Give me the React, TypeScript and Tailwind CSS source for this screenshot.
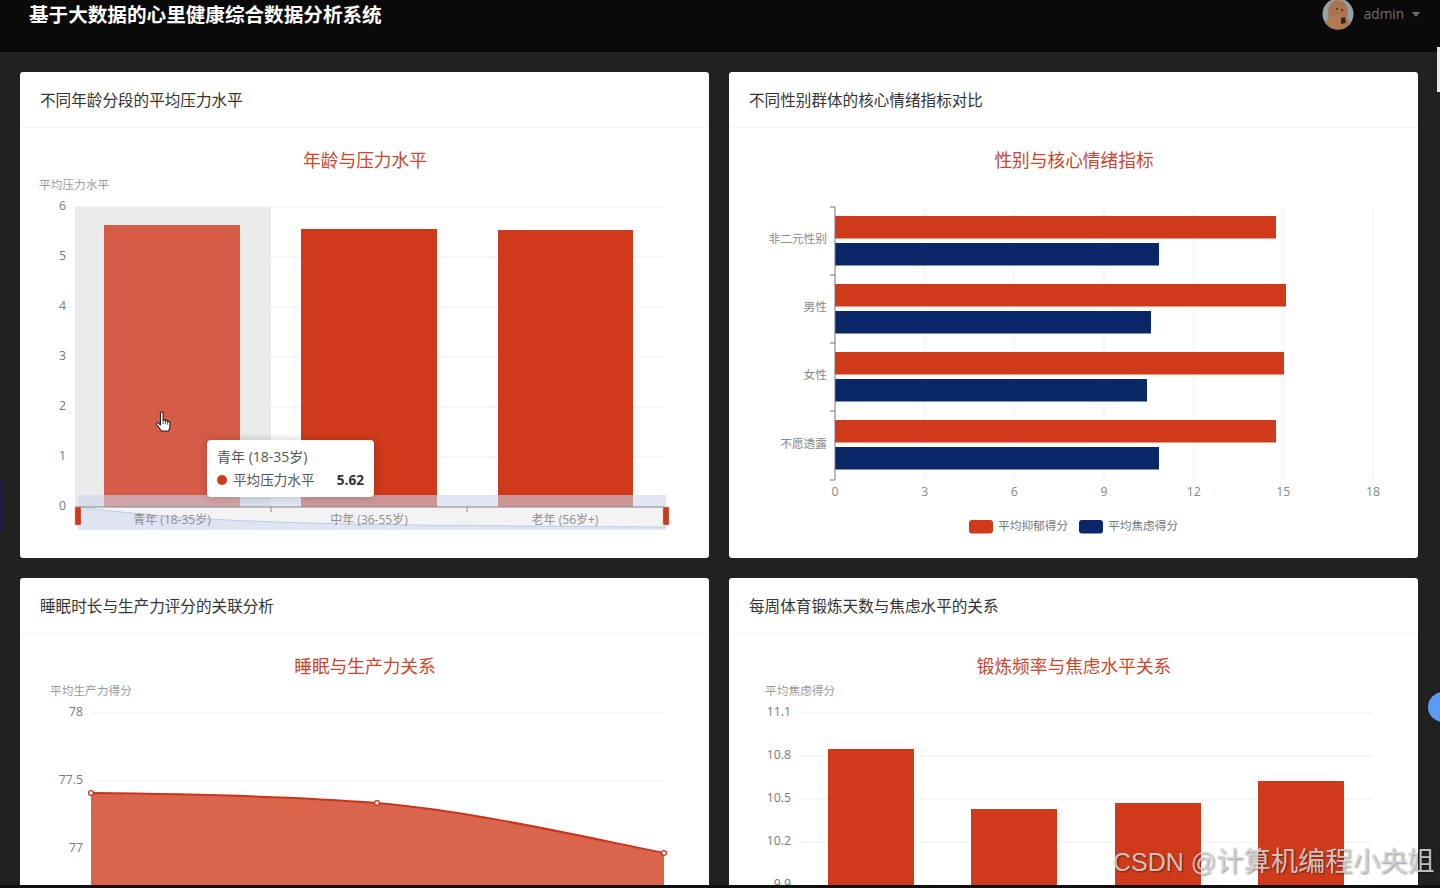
const RED = '#cf3a1a';
const NAVY = '#0a2868';
const FONT = '"Open Sans", "Noto Sans CJK SC", sans-serif';

function Card({ title, children }: { title: string; children: React.ReactNode }) {
  return (
    <div className="bg-white rounded-[3px] overflow-hidden shrink-0">
      <div className="h-[56px] pt-[2px] px-5 flex items-center border-b border-[#f5f5f8] text-[15.6px] text-[#333333]">
        {title}
      </div>
      {children}
    </div>
  );
}

// all charts share the same frame: 689 wide, 430 tall below the card heading
function ChartSvg({ children }: { children: React.ReactNode }) {
  return (
    <svg width={689} height={430} viewBox="0 0 689 430" className="block" style={{ fontFamily: FONT }}>
      {children}
    </svg>
  );
}

function ChartTitle({ text }: { text: string }) {
  return (
    <text x={345} y={39} textAnchor="middle" fontSize={17.7} fill="#c9462c">
      {text}
    </text>
  );
}

function StressChart() {
  const ticks = [6, 5, 4, 3, 2, 1, 0];
  return (
    <ChartSvg>
      <ChartTitle text="年龄与压力水平" />
      <text x={19} y={61} fontSize={11.7} fill="#999999">平均压力水平</text>
      <rect x={55} y={79} width={196} height={300} fill="#ebebeb" />
      {ticks.map((t) => (
        <g key={t}>
          <line x1={55} x2={644} y1={79 + (6 - t) * 50} y2={79 + (6 - t) * 50} stroke="#eeeef3" />
          <text x={46} y={82 + (6 - t) * 50} textAnchor="end" fontSize={12.3} fill="#777777">{t}</text>
        </g>
      ))}
      <rect x={84} y={97} width={136} height={282} fill="#d55c46" />
      <rect x={281} y={101} width={136} height={278} fill={RED} />
      <rect x={478} y={102} width={135} height={277} fill={RED} />
      {/* data zoom */}
      <rect x={58} y={367} width={588} height={12} fill="#c9d4ea" opacity={0.6} />
      <rect x={58} y={379} width={588} height={23} fill="#f3f3f3" />
      <path d="M58 379 C200 397 330 397 646 399 L646 402 L58 402 Z" fill="#e0e4f2" />
      <path d="M58 379 C200 397 330 397 646 399" fill="none" stroke="#bccbea" />
      <line x1={55} x2={644} y1={379} y2={379} stroke="#888888" />
      <line x1={251} x2={251} y1={379} y2={384} stroke="#888888" />
      <line x1={447} x2={447} y1={379} y2={384} stroke="#888888" />
      <rect x={55} y={379} width={6} height={18} rx={1} fill={RED} stroke="#c9a9a2" strokeWidth={0.5} />
      <rect x={643} y={379} width={6} height={18} rx={1} fill={RED} stroke="#c9a9a2" strokeWidth={0.5} />
      <text x={152} y={396} textAnchor="middle" fontSize={12} fill="#8f8f8f">青年 (18-35岁)</text>
      <text x={349} y={396} textAnchor="middle" fontSize={12} fill="#8f8f8f">中年 (36-55岁)</text>
      <text x={545} y={396} textAnchor="middle" fontSize={12} fill="#8f8f8f">老年 (56岁+)</text>
    </ChartSvg>
  );
}

const GENDER_ROWS = [
  { label: '非二元性别', a: 1276, b: 1159, y: 88, textY: 115 },
  { label: '男性', a: 1286, b: 1151, y: 156, textY: 183 },
  { label: '女性', a: 1284, b: 1147, y: 224, textY: 251 },
  { label: '不愿透露', a: 1276, b: 1159, y: 292, textY: 320 },
];

function GenderChart() {
  return (
    <ChartSvg>
      <ChartTitle text="性别与核心情绪指标" />
      {[0, 3, 6, 9, 12, 15, 18].map((t, i) => {
        const x = 106 + i * 89.67;
        return (
          <g key={t}>
            {i > 0 && <line x1={x} x2={x} y1={79} y2={352} stroke="#f0f0f5" />}
            <text x={x} y={368} textAnchor="middle" fontSize={12.3} fill="#888888">{t}</text>
          </g>
        );
      })}
      {GENDER_ROWS.map((r) => (
        <g key={r.label}>
          <rect x={106} y={r.y} width={r.a - 835} height={22.5} fill={RED} />
          <rect x={106} y={r.y + 27} width={r.b - 835} height={22.5} fill={NAVY} />
          <text x={98} y={r.textY} textAnchor="end" fontSize={11.7} fill="#888888">{r.label}</text>
        </g>
      ))}
      <line x1={106} x2={106} y1={79} y2={352} stroke="#777777" />
      {[79, 147, 215, 283, 352].map((y) => (
        <line key={y} x1={101} x2={106} y1={y} y2={y} stroke="#777777" />
      ))}
      <rect x={240} y={392} width={24} height={13.5} rx={3} fill={RED} />
      <text x={269} y={402} fontSize={11.7} fill="#777777">平均抑郁得分</text>
      <rect x={350} y={392} width={24} height={13.5} rx={3} fill={NAVY} />
      <text x={379} y={402} fontSize={11.7} fill="#777777">平均焦虑得分</text>
    </ChartSvg>
  );
}

function SleepChart() {
  const ticks = [
    { t: '78', y: 79 },
    { t: '77.5', y: 147 },
    { t: '77', y: 215 },
  ];
  const line = 'M71 159 C170 160 270 162 357 169 C450 177 550 200 644 219';
  return (
    <ChartSvg>
      <ChartTitle text="睡眠与生产力关系" />
      <text x={30} y={61} fontSize={11.7} fill="#999999">平均生产力得分</text>
      {ticks.map((k) => (
        <g key={k.t}>
          <line x1={71} x2={644} y1={k.y} y2={k.y} stroke="#eeeef3" />
          <text x={63} y={k.y + 3} textAnchor="end" fontSize={12.3} fill="#777777">{k.t}</text>
        </g>
      ))}
      <path d={`${line} L644 430 L71 430 Z`} fill={RED} opacity={0.78} />
      <path d={line} fill="none" stroke="#c8351a" strokeWidth={2} />
      {[[71, 159], [357, 169], [644, 219]].map(([cx, cy]) => (
        <circle key={cx} cx={cx} cy={cy} r={2.4} fill="#ffffff" stroke="#c8351a" strokeWidth={1.3} />
      ))}
    </ChartSvg>
  );
}

function ExerciseChart() {
  const ticks = [
    { t: '11.1', y: 79 },
    { t: '10.8', y: 122 },
    { t: '10.5', y: 165 },
    { t: '10.2', y: 208 },
    { t: '9.9', y: 251 },
  ];
  const bars = [
    { x: 99, top: 115 },
    { x: 242, top: 175 },
    { x: 386, top: 169 },
    { x: 529, top: 147 },
  ];
  return (
    <ChartSvg>
      <ChartTitle text="锻炼频率与焦虑水平关系" />
      <text x={36} y={61} fontSize={11.7} fill="#999999">平均焦虑得分</text>
      {ticks.map((k) => (
        <g key={k.t}>
          <line x1={70} x2={644} y1={k.y} y2={k.y} stroke="#eeeef3" />
          <text x={62} y={k.y + 3} textAnchor="end" fontSize={12.3} fill="#777777">{k.t}</text>
        </g>
      ))}
      {bars.map((b) => (
        <rect key={b.x} x={b.x} y={b.top} width={86} height={430 - b.top} fill={RED} />
      ))}
    </ChartSvg>
  );
}

function Avatar() {
  return (
    <svg width={32} height={32} viewBox="0 0 32 32" className="block">
      <clipPath id="avatar-clip"><circle cx={16} cy={16} r={15.5} /></clipPath>
      <g clipPath="url(#avatar-clip)">
        <rect width={32} height={32} fill="#8fa3a8" />
        <ellipse cx={16} cy={14} rx={10} ry={12} fill="#a9744e" />
        <ellipse cx={16} cy={30} rx={14} ry={13} fill="#b07a52" />
        <circle cx={15} cy={11} r={1} fill="#3a2a20" />
        <circle cx={20} cy={12} r={1} fill="#3a2a20" />
        <path d="M19 20 l4 -1 l1 6 l-5 1 z" fill="#2e2a28" />
      </g>
    </svg>
  );
}

function HandCursor() {
  return (
    <svg width={17} height={21} viewBox="0 0 17 21" className="absolute left-[155px] top-[411px]">
      <path
        d="M5.5 2.2c0-1.6 2.6-1.6 2.6 0V9.5c0-1.2 2.3-1.2 2.3 0v.8c0-1.2 2.3-1.2 2.3 0v.8c0-1.1 2.2-1.1 2.2 0V16c0 2-1 3.2-1.8 4H6.5L1.6 13.5c-.9-1.3.8-2.6 1.9-1.5l2 2z"
        fill="#ffffff"
        stroke="#222222"
        strokeWidth={1.1}
        strokeLinejoin="round"
      />
      <path d="M8.1 9.5v3.5M10.4 10.3v3M12.7 11v2.6" fill="none" stroke="#222222" strokeWidth={0.8} />
    </svg>
  );
}

export default function App() {
  return (
    <div className="relative w-[1440px] h-[888px] overflow-hidden bg-[#212121]" style={{ fontFamily: FONT }}>
      <header className="h-[52px] bg-[#0a0a0a] flex justify-between pl-[29px] pr-5">
        <h1 className="text-[19.6px] leading-[30px] font-bold text-white">基于大数据的心里健康综合数据分析系统</h1>
        <div className="flex items-start gap-[10px] -mt-[2px]">
          <Avatar />
          <span className="text-[13.6px] leading-[32px] text-[#6e6e6e]">admin</span>
          <span className="mt-[14px] ml-[-2px] w-0 h-0 border-x-[4px] border-x-transparent border-t-[5px] border-t-[#6e6e6e]" />
        </div>
      </header>

      <main className="grid grid-cols-[689px_689px] gap-x-5 gap-y-5 pl-5 pt-5">
        <Card title="不同年龄分段的平均压力水平"><StressChart /></Card>
        <Card title="不同性别群体的核心情绪指标对比"><GenderChart /></Card>
        <Card title="睡眠时长与生产力评分的关联分析"><SleepChart /></Card>
        <Card title="每周体育锻炼天数与焦虑水平的关系"><ExerciseChart /></Card>
      </main>

      {/* chart tooltip */}
      <div className="absolute left-[207px] top-[440px] w-[167px] h-[57px] bg-white rounded-[4px] shadow-[0_0_8px_rgba(0,0,0,0.2)] px-[10px] pt-[7px] text-[13.6px] leading-[20px] text-[#555555]">
        <div className="text-[14px]">青年 (18-35岁)</div>
        <div className="flex items-center mt-[3px]">
          <span className="w-[10px] h-[10px] rounded-full bg-[#cf3a1a] mr-[6px]" />
          <span>平均压力水平</span>
          <span className="ml-auto font-bold text-[#333333]">5.62</span>
        </div>
      </div>

      <HandCursor />

      {/* screen recording leftovers */}
      <div className="absolute left-0 top-[480px] w-px h-[50px] bg-[#1a1f5c]" />
      <div className="absolute left-[1437px] top-[47px] w-[3px] h-[45px] bg-white/90" />
      <div className="absolute left-[1428px] top-[692px] w-[30px] h-[30px] rounded-full bg-[#5b9bf5]" />
      <div className="absolute left-0 bottom-0 w-full h-[3px] bg-[#111111]" />
      <div
        className="absolute left-[1113px] top-[843px] text-[27.3px] leading-[38px] whitespace-nowrap text-[#d6d6d6]/90 [text-shadow:1px_1px_2px_rgba(0,0,0,0.45)]"
        style={{ fontFamily: '"Liberation Sans", "Noto Sans CJK SC", sans-serif' }}
      >
        <span className="text-[25px]">CSDN @</span>计算机编程小央姐
      </div>
    </div>
  );
}
